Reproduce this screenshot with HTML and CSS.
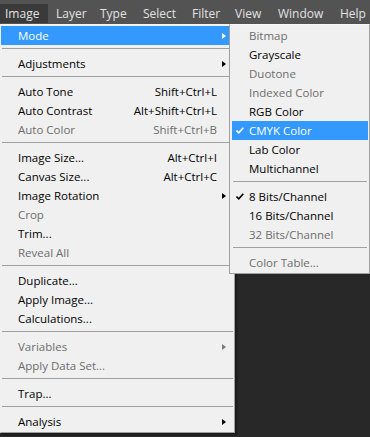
FILE: index.html
```html
<!DOCTYPE html>
<html lang="en">
<head>
  <meta charset="UTF-8">
  <meta name="viewport" content="width=device-width, initial-scale=1.0">
  <title>Image Menu</title>
  <link rel="stylesheet" href="styles.css">
</head>
<body>
  <div id="menubar">
    <div class="bar-item open">Image</div>
    <div class="bar-item">Layer</div>
    <div class="bar-item">Type</div>
    <div class="bar-item">Select</div>
    <div class="bar-item">Filter</div>
    <div class="bar-item">View</div>
    <div class="bar-item">Window</div>
    <div class="bar-item">Help</div>
  </div>

  <div id="workspace">
    <div class="menu" id="image-menu">
      <div class="item active sub"><span class="label">Mode</span><span class="key"></span><span class="arrow"></span></div>
      <div class="sep"></div>
      <div class="item sub"><span class="label">Adjustments</span><span class="key"></span><span class="arrow"></span></div>
      <div class="sep"></div>
      <div class="item"><span class="label">Auto Tone</span><span class="key">Shift+Ctrl+L</span></div>
      <div class="item"><span class="label">Auto Contrast</span><span class="key">Alt+Shift+Ctrl+L</span></div>
      <div class="item off"><span class="label">Auto Color</span><span class="key">Shift+Ctrl+B</span></div>
      <div class="sep"></div>
      <div class="item"><span class="label">Image Size...</span><span class="key">Alt+Ctrl+I</span></div>
      <div class="item"><span class="label">Canvas Size...</span><span class="key">Alt+Ctrl+C</span></div>
      <div class="item sub"><span class="label">Image Rotation</span><span class="key"></span><span class="arrow"></span></div>
      <div class="item off"><span class="label">Crop</span></div>
      <div class="item"><span class="label">Trim...</span></div>
      <div class="item off"><span class="label">Reveal All</span></div>
      <div class="sep"></div>
      <div class="item"><span class="label">Duplicate...</span></div>
      <div class="item"><span class="label">Apply Image...</span></div>
      <div class="item"><span class="label">Calculations...</span></div>
      <div class="sep"></div>
      <div class="item off sub"><span class="label">Variables</span><span class="key"></span><span class="arrow"></span></div>
      <div class="item off"><span class="label">Apply Data Set...</span></div>
      <div class="sep"></div>
      <div class="item"><span class="label">Trap...</span></div>
      <div class="sep"></div>
      <div class="item sub"><span class="label">Analysis</span><span class="key"></span><span class="arrow"></span></div>
    </div>

    <div class="menu" id="mode-menu">
      <div class="item off"><span class="check"></span><span class="label">Bitmap</span></div>
      <div class="item"><span class="check"></span><span class="label">Grayscale</span></div>
      <div class="item off"><span class="check"></span><span class="label">Duotone</span></div>
      <div class="item off"><span class="check"></span><span class="label">Indexed Color</span></div>
      <div class="item"><span class="check"></span><span class="label">RGB Color</span></div>
      <div class="item active"><span class="check"><svg width="8" height="7" viewBox="0 0 8 7"><path d="M0.5 3.5 L2.8 5.8 L7.3 0.8" fill="none" stroke="currentColor" stroke-width="1.6"/></svg></span><span class="label">CMYK Color</span></div>
      <div class="item"><span class="check"></span><span class="label">Lab Color</span></div>
      <div class="item"><span class="check"></span><span class="label">Multichannel</span></div>
      <div class="sep"></div>
      <div class="item"><span class="check"><svg width="8" height="7" viewBox="0 0 8 7"><path d="M0.5 3.5 L2.8 5.8 L7.3 0.8" fill="none" stroke="currentColor" stroke-width="1.6"/></svg></span><span class="label">8 Bits/Channel</span></div>
      <div class="item"><span class="check"></span><span class="label">16 Bits/Channel</span></div>
      <div class="item off"><span class="check"></span><span class="label">32 Bits/Channel</span></div>
      <div class="sep"></div>
      <div class="item off"><span class="check"></span><span class="label">Color Table...</span></div>
    </div>
  </div>
</body>
</html>
```

FILE: styles.css
```css
body {
  margin: 0;
  padding: 0;
  background: #282828;
  font-family: "Open Sans", "Noto Sans", sans-serif;
  font-size: 11.5px;
  width: 370px;
  height: 437px;
  overflow: hidden;
}
#menubar {
  display: grid;
  grid-template-columns: 48px 44px 43px 49px 43px 43px 62px 1fr;
  height: 24px;
  background: #535353;
  color: #e2e2e2;
  font-size: 12px;
}
.bar-item {
  height: 19px;
  margin-top: 4px;
  line-height: 19px;
  padding-left: 8px;
  white-space: nowrap;
}
.bar-item:first-child {
  padding-left: 5px;
}
.bar-item.open {
  background: #3a3a3a;
}
#workspace {
  position: relative;
}
.menu {
  background: #f0f0f0;
  color: #000;
  box-sizing: border-box;
}
#image-menu {
  width: 235px;
  border: 1px solid #a0a0a0;
  border-left-color: #f0f0f0;
  border-top-color: #f7f7f7;
  padding: 1px 0;
  box-shadow: 2px 2px 2px rgba(0,0,0,0.35);
}
#mode-menu {
  position: absolute;
  left: 229px;
  top: 0;
  width: 141px;
  border: 1px solid #a0a0a0;
  border-top-color: #f7f7f7;
  padding: 1px 1px 1px 2px;
}
.item {
  display: grid;
  grid-template-columns: 1fr auto 17px;
  align-items: center;
  height: 19px;
  padding-left: 17px;
  white-space: nowrap;
}
#mode-menu .item {
  grid-template-columns: 17px 1fr;
  padding-left: 0;
}
.item.off {
  color: #6d6d6d;
}
.item.active {
  background: #3399ff;
  color: #fff;
}
.arrow {
  width: 0;
  height: 0;
  margin-left: 5px;
  border-top: 3.5px solid transparent;
  border-bottom: 3.5px solid transparent;
  border-left: 4px solid currentColor;
}
.item.off .arrow {
  border-left-color: #7a7a7a;
}
.check {
  display: flex;
  align-items: center;
  padding-left: 4px;
  height: 19px;
}
.sep {
  height: 1px;
  margin: 3px 1px 5px 1px;
  background: #a0a0a0;
}
```
